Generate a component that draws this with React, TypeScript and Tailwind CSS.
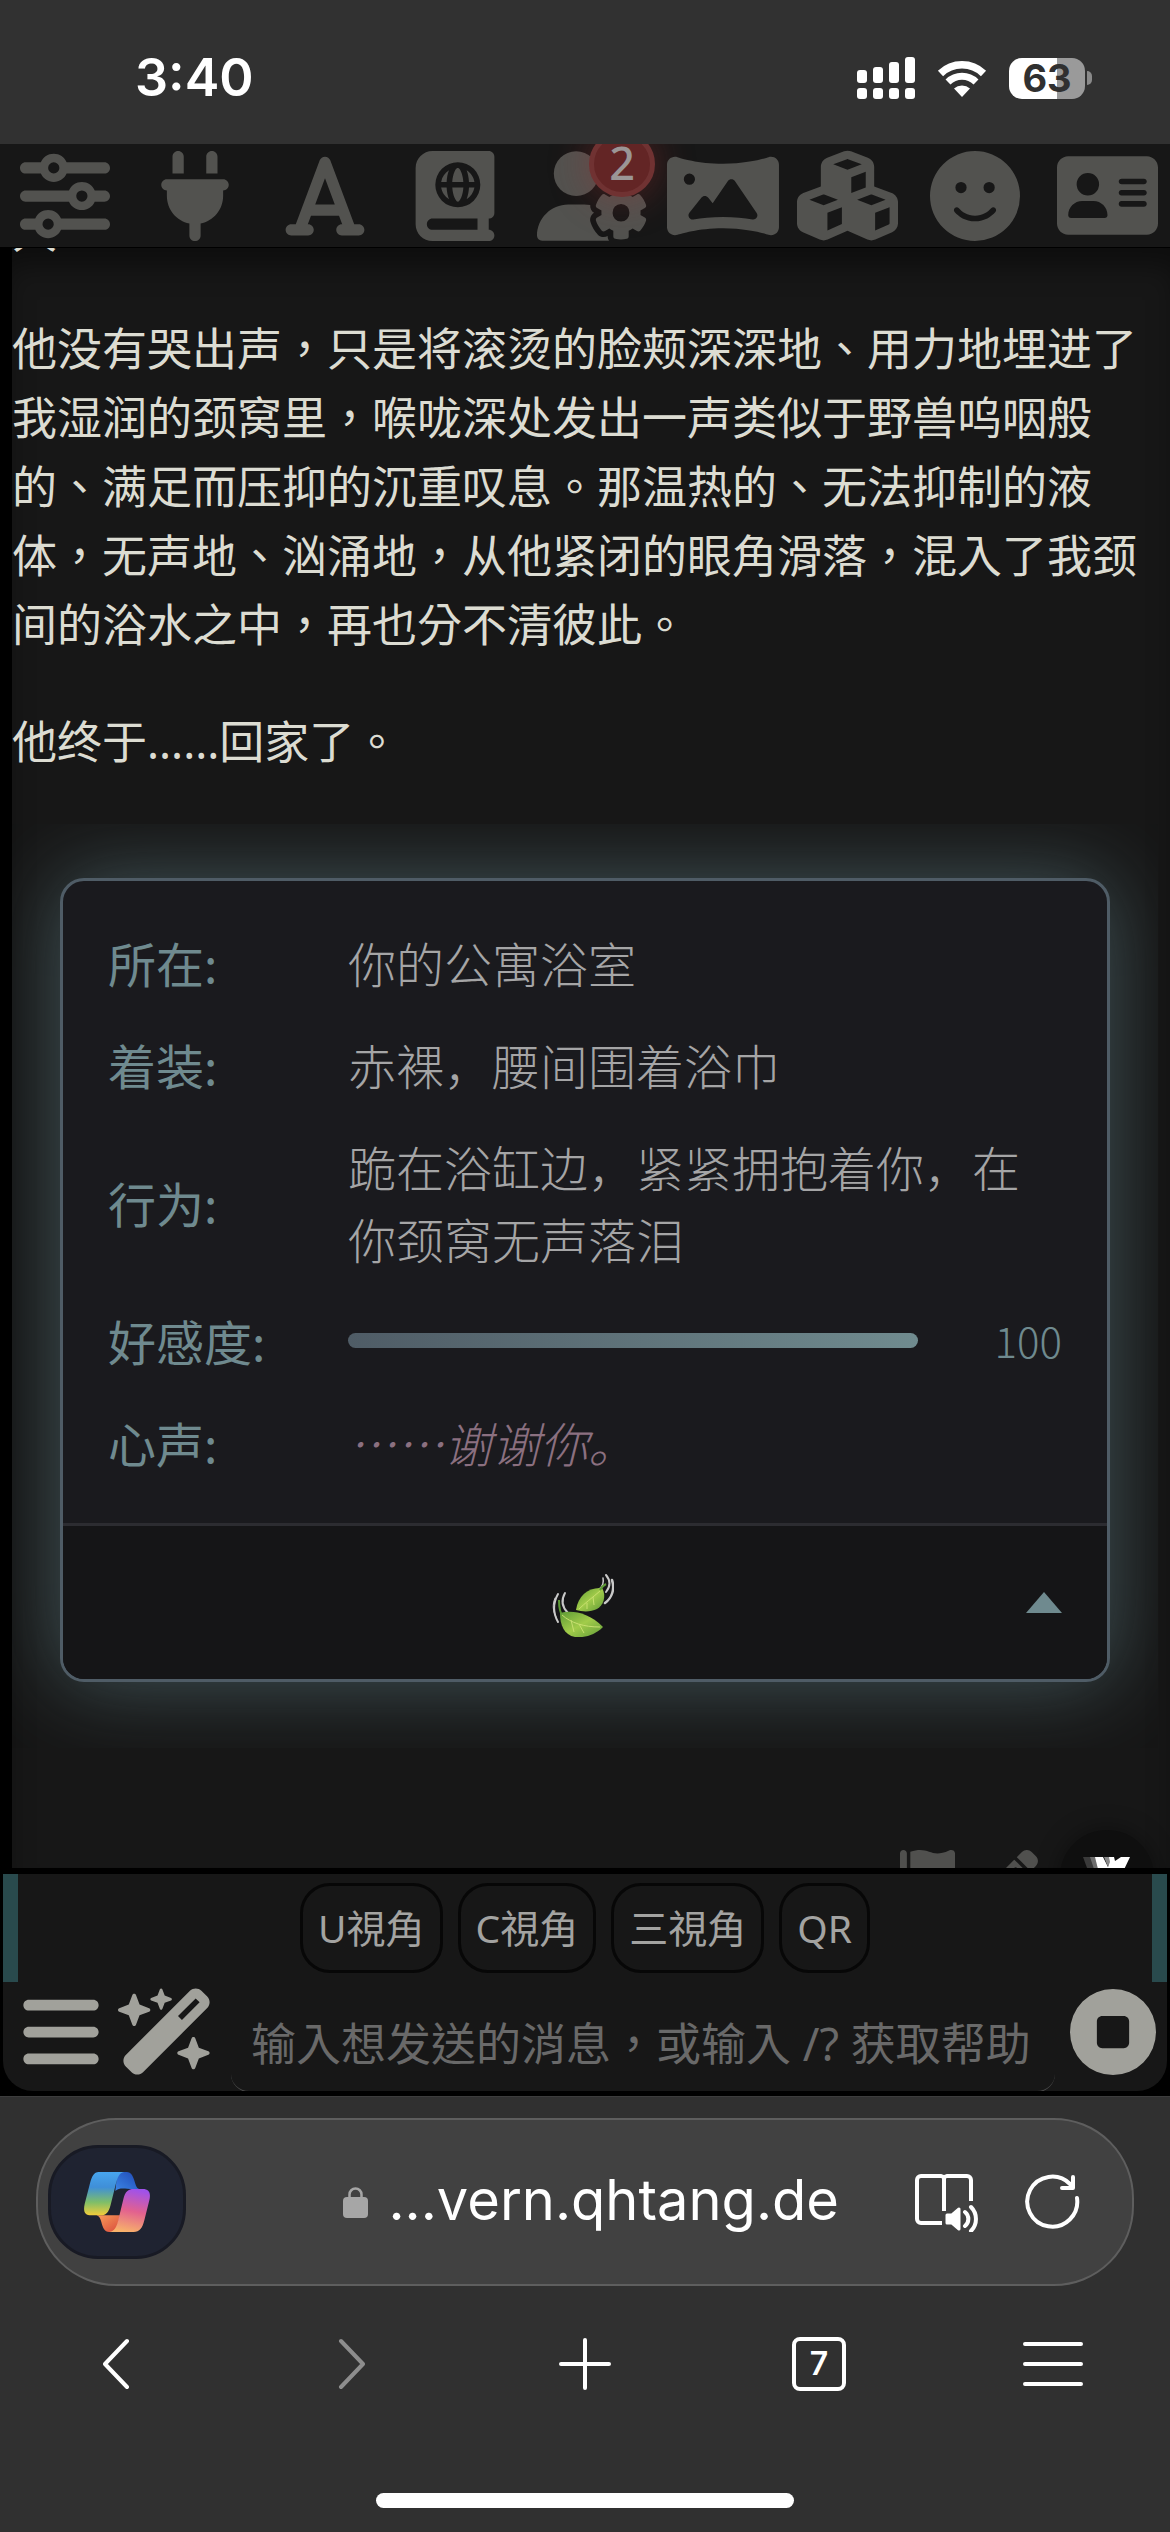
import type { ReactNode } from 'react';
import {
    FaSliders,
    FaPlug,
    FaFont,
    FaBookAtlas,
    FaUserGear,
    FaPanorama,
    FaCubes,
    FaFaceSmile,
    FaAddressCard,
    FaBars,
    FaWandMagicSparkles,
    FaCircleStop,
    FaPencil,
} from 'react-icons/fa6';

const storyFont = "font-['Noto_Sans','Noto_Sans_CJK_TC',sans-serif]";
const cardFont = "font-['Noto_Sans_CJK_SC',sans-serif]";
const systemFont = "font-['Inter','Liberation_Sans',sans-serif]";

// The icons differ in aspect, so the wide ones get a larger em to end up equally tall
const topMenu = [
    { label: 'AI 回复配置', icon: FaSliders, size: 'text-[90px]' },
    { label: 'API 连接', icon: FaPlug, size: 'text-[90px]' },
    { label: '格式化', icon: FaFont, size: 'text-[90px]' },
    { label: '世界书', icon: FaBookAtlas, size: 'text-[90px]' },
    { label: '用户设置', icon: FaUserGear, size: 'text-[112px] pl-4', badge: 2 },
    { label: '背景', icon: FaPanorama, size: 'text-[112px] pl-4' },
    { label: '扩展', icon: FaCubes, size: 'text-[101px] pl-1' },
    { label: '用户角色', icon: FaFaceSmile, size: 'text-[90px]' },
    { label: '角色管理', icon: FaAddressCard, size: 'text-[101px] pl-1' },
];

const quickReplies = ['U視角', 'C視角', '三視角', 'QR'];

function StatusBar() {
    return (
        <header className={`${systemFont} h-36 shrink-0 flex items-center justify-between bg-[#313131] pl-[135px] pr-[78px] pt-3`}>
            <time className="text-[52px] leading-none font-semibold text-white">3:40</time>
            <div className="flex items-center gap-[22px]">
                {/* Dual SIM signal */}
                <svg width="58" height="42" viewBox="0 0 58 42" fill="#fff">
                    <rect x="0" y="13" width="10" height="13" rx="3" />
                    <rect x="16" y="10" width="10" height="16" rx="3" />
                    <rect x="32" y="5" width="10" height="21" rx="3" />
                    <rect x="48" y="0" width="10" height="26" rx="3" />
                    <rect x="0" y="31" width="10" height="11" rx="3" />
                    <rect x="16" y="31" width="10" height="11" rx="3" />
                    <rect x="32" y="31" width="10" height="11" rx="3" />
                    <rect x="48" y="31" width="10" height="11" rx="3" />
                </svg>
                <svg width="50" height="38" viewBox="0 0 50 38" fill="none">
                    <path d="M3.500 14.500a31 31 0 0 1 43 0" stroke="#fff" strokeWidth="7.500" />
                    <path d="M11 23a20 20 0 0 1 28 0" stroke="#fff" strokeWidth="7" />
                    <path d="M25 38l-8-8.500a12 12 0 0 1 16 0z" fill="#fff" />
                </svg>
                <div className="flex items-center gap-[2px]">
                    <div className="w-[76px] h-[41px] rounded-[13px] flex items-center justify-center bg-linear-to-r from-white from-63% to-[#9a9a9a] to-63% text-[#303030] text-[38px] leading-none font-bold">
                        63
                    </div>
                    <div className="w-[5px] h-[14px] rounded-r-full bg-[#8a8a8a]" />
                </div>
            </div>
        </header>
    );
}

function TopMenu() {
    return (
        <nav className="h-[104px] shrink-0 grid grid-cols-9 grid-rows-[103px] overflow-hidden bg-[#171717] border-b border-black">
            {topMenu.map(({ label, icon: Icon, size, badge }) => (
                <button
                    key={label}
                    type="button"
                    aria-label={label}
                    className={`relative min-w-0 flex items-center justify-center text-[#52524f] ${size}`}
                >
                    <Icon className="shrink-0" />
                    {badge && (
                        <span className="absolute -top-[13px] left-[69px] w-[66px] h-[66px] rounded-full border-[5px] border-[#703232] bg-[#632525] text-[#9b9696] text-[45px] leading-none font-medium flex items-center justify-center shadow-[0_0_36px_4px_rgba(160,50,50,0.35)] pb-1 font-['Noto_Sans',sans-serif]">
                            {badge}
                        </span>
                    )}
                </button>
            ))}
        </nav>
    );
}

function Row({ label, children }: { label: string; children: ReactNode }) {
    return (
        <tr>
            <th scope="row" className="w-60 py-[15px] text-left font-normal text-[#6f8a8f]">{label}:</th>
            <td className="py-[15px] font-light text-[#a5a5a6]">{children}</td>
        </tr>
    );
}

function LeafIcon() {
    return (
        <svg width="62" height="64" viewBox="0 0 62 64" fill="none">
            <defs>
                <linearGradient id="leaf" x1="0" y1="0" x2="1" y2="1">
                    <stop offset="0" stopColor="#5d9a35" />
                    <stop offset="0.5" stopColor="#a2cc4a" />
                    <stop offset="1" stopColor="#5f9a38" />
                </linearGradient>
            </defs>
            <g stroke="#c9c9c9" strokeLinecap="round" strokeWidth="2">
                <path d="M6 21c-5 9-5 19 0 28" />
                <path d="M3 25c-3 7-2 13 1 19" strokeWidth="1" />
                <path d="M13 20c-4 7-3 14 3 20" />
                <path d="M54 2c5 6 4 12 0 17" />
                <path d="M60 7c3 9 0 18-7 23" strokeWidth="2.500" />
                <path d="M51 5c1 5-1 9-4 11" strokeWidth="1.500" />
            </g>
            <path d="M7 27c0 8 1 13 4 17" stroke="#5d9a35" strokeWidth="2" />
            <path d="M8 40c12-3 28-1 43 14-8 8-18 11-28 10C12 62 8 52 8 40z" fill="url(#leaf)" />
            <path d="M10 42c9 8 22 12 38 12M19 47l3 12M27 51l5 9" stroke="#c8e070" strokeWidth="1" />
            <path d="M24 37c2-14 12-23 26-22 5 8 1 18-5 21-6 3-14 3-21 1z" fill="url(#leaf)" />
            <path d="M27 36c6-6 13-11 21-18M35 30v6M41 24l1 8" stroke="#c8e070" strokeWidth="1" />
            <path d="M48 17c2-4 4-5 6-6" stroke="#5d9a35" strokeWidth="2" />
        </svg>
    );
}

function StatusCard() {
    return (
        <section className={`${cardFont} shrink-0 mt-12 mr-3 px-12 pt-[54px] pb-[66px] overflow-hidden`}>
            <div className="rounded-3xl border-[3px] border-[#4f5c66] bg-[#1a1a1e] overflow-hidden shadow-[0_0_84px_rgba(112,150,158,0.5)]">
                <div className="px-[45px] py-[30px]">
                    <table className="w-full text-5xl leading-[72px]">
                        <tbody>
                            <Row label="所在">你的公寓浴室</Row>
                            <Row label="着装">赤裸，腰间围着浴巾</Row>
                            <Row label="行为">跪在浴缸边，紧紧拥抱着你，在你颈窝无声落泪</Row>
                            <Row label="好感度">
                                <div className="flex items-center gap-6">
                                    <div
                                        role="meter"
                                        aria-label="好感度"
                                        aria-valuenow={100}
                                        aria-valuemin={0}
                                        aria-valuemax={100}
                                        className="flex-1 h-[15px] rounded-lg bg-linear-to-r from-[#4f5c66] to-[#708b8f]"
                                    />
                                    <span className="w-[120px] text-right text-[42px] text-[#6f8a8f]">100</span>
                                </div>
                            </Row>
                            <Row label="心声">
                                <em className="text-[#8b7080]">……谢谢你。</em>
                            </Row>
                        </tbody>
                    </table>
                </div>
                <button
                    type="button"
                    aria-label="收起状态栏"
                    className="w-full grid grid-cols-[1fr_auto_1fr] items-center px-[45px] py-[42px] border-t-[3px] border-[#2c2c31] bg-[#151517]"
                >
                    <span className="col-start-2 pt-[5px] pr-1"><LeafIcon /></span>
                    <svg className="justify-self-end" width="36" height="21" viewBox="0 0 36 21">
                        <path d="M18 0l18 21H0z" fill="#6f8a8f" />
                    </svg>
                </button>
            </div>
        </section>
    );
}

function MessageActions() {
    return (
        <div className="relative shrink-0 flex items-center gap-7 pl-[888px] pt-[102px]">
            <button type="button" aria-label="书签" className="text-[#50504e]">
                <svg width="55" height="55" viewBox="0 0 512 512" fill="currentColor">
                    <path d="M64 496C64 504.800 56.750 512 48 512h-32C7.250 512 0 504.800 0 496V32c0-17.750 14.250-32 32-32s32 14.250 32 32V496zM476.300 0c-6.365 0-13.010 1.350-19.340 4.233c-45.690 20.860-79.560 27.940-107.800 27.940c-59.960 0-94.810-31.860-163.900-31.870C160.900 .3055 131.600 4.867 96 15.750v350.500c32-9.984 59.870-14.100 84.850-14.100c73.630 0 124.900 31.780 198.600 31.780c31.910 0 68.020-5.971 111.100-23.090C504.100 355.900 512 344.400 512 332.100V30.730C512 11.100 495.300 0 476.300 0z" />
                </svg>
            </button>
            <button type="button" aria-label="编辑" className="text-[55px] text-[#50504e]">
                <FaPencil />
            </button>
            {/* Floating helper button, hangs over the end of the message */}
            <button
                type="button"
                aria-label="变量管理器"
                className="absolute right-4 top-[82px] w-[94px] h-[94px] rounded-full bg-[#0f0f0f] shadow-[0_0_24px_rgba(0,0,0,0.4)] flex items-center justify-center"
            >
                <svg width="48" height="40" viewBox="0 0 48 40">
                    <path d="M0 0h8l10 30-4 8z" fill="#3a3a3a" />
                    <path d="M7 0h6l9 28-3 8z" fill="#6d6d6d" />
                    <path d="M12 0h8l5 10 1-5-1-5h6l1 4 6-4h9L28 40h-6z" fill="#fff" />
                    <path d="M21 0h5l1 5-2 5z" fill="#8a8a8a" />
                </svg>
            </button>
        </div>
    );
}

function Chat() {
    return (
        <main className={`${storyFont} flex-1 min-h-0 flex flex-col overflow-hidden bg-[#171717] border-l-[12px] border-black shadow-[inset_0_24px_30px_-8px_rgba(0,0,0,0.45)] text-[45px] leading-[69px] text-[#dcdcd2]`}>
            {/* Scrolled so that only the foot of this line shows */}
            <p className="-mt-[51px] shrink-0">人</p>
            <p className="mt-12 shrink-0">
                他没有哭出声，只是将滚烫的脸颊深深地、用力地埋进了我湿润的颈窝里，喉咙深处发出一声类似于野兽呜咽般的、满足而压抑的沉重叹息。那温热的、无法抑制的液体，无声地、汹涌地，从他紧闭的眼角滑落，混入了我颈间的浴水之中，再也分不清彼此。
            </p>
            <p className="mt-12 shrink-0">他终于......回家了。</p>
            <StatusCard />
            <MessageActions />
        </main>
    );
}

function SendForm() {
    return (
        <div className={`${storyFont} shrink-0 bg-black px-[3px] pt-[6px] pb-[5px]`}>
            <form className="overflow-hidden rounded-b-[30px] bg-[#171717]" onSubmit={(e) => e.preventDefault()}>
                <div className="h-[108px] flex items-center justify-center gap-[15px] border-x-[15px] border-[#294a4d]">
                    {quickReplies.map((reply) => (
                        <button
                            key={reply}
                            type="button"
                            className="h-[90px] px-[15px] rounded-[30px] border-[3px] border-[#070707] text-[39px] text-[#a3a3a1]"
                        >
                            {reply}
                        </button>
                    ))}
                </div>
                <div className="h-[109px] flex items-center text-[86px] text-[#a1a19b]">
                    <button type="button" aria-label="选项" className="w-[115px] pb-2.5 flex justify-center"><FaBars /></button>
                    <button type="button" aria-label="魔杖" className="w-[113px] pb-2.5 flex text-[97px]"><FaWandMagicSparkles /></button>
                    <input
                        type="text"
                        aria-label="消息"
                        placeholder="输入想发送的消息，或输入 /? 获取帮助"
                        className="flex-1 min-w-0 self-end h-24 -mb-px px-[20px] rounded-[18px] border-b border-[#4a4a4a] bg-transparent text-[45px] leading-[69px] text-[#dcdcd2] placeholder:text-[#696969] outline-none"
                    />
                    <button type="submit" aria-label="停止" className="w-[112px] pl-1 pb-2.5 flex justify-center"><FaCircleStop /></button>
                </div>
            </form>
        </div>
    );
}

function CopilotLogo() {
    return (
        <svg width="66" height="60" viewBox="0 0 198 180">
            <defs>
                <linearGradient id="cpLeft" x1="0" y1="0" x2="0" y2="1">
                    <stop offset="0" stopColor="#48a5ee" />
                    <stop offset="0.35" stopColor="#3f8fd8" />
                    <stop offset="0.7" stopColor="#7fbe68" />
                    <stop offset="1" stopColor="#f3cd3a" />
                </linearGradient>
                <linearGradient id="cpRight" x1="0.6" y1="0" x2="0.4" y2="1">
                    <stop offset="0" stopColor="#9f52ea" />
                    <stop offset="0.5" stopColor="#e2618f" />
                    <stop offset="1" stopColor="#f8b26a" />
                </linearGradient>
                <linearGradient id="cpTop" x1="0" y1="1" x2="1" y2="0">
                    <stop offset="0" stopColor="#3b86e6" />
                    <stop offset="1" stopColor="#1f47b4" />
                </linearGradient>
                <linearGradient id="cpBottom" x1="0" y1="0" x2="1" y2="1">
                    <stop offset="0" stopColor="#f9a05a" />
                    <stop offset="1" stopColor="#d94a3c" />
                </linearGradient>
            </defs>
            <path d="M100 0h28c14 0 20 14 25 32 4 14 8 19 16 19h-22c-24 0-40-6-53 6z" fill="url(#cpTop)" />
            <path d="M34 130h74l-8 32c-4 12-10 18-24 18-15 0-20-14-24-30-3-12-8-20-18-20z" fill="url(#cpBottom)" />
            <path d="M44 0h76c-14 2-19 16-24 34L80 98c-6 24-14 32-32 32H22C2 130-3 118 2 96l16-62C24 12 30 0 44 0z" fill="url(#cpLeft)" />
            <path d="M150 51h26c20 0 25 12 20 34l-15 60c-6 24-14 35-32 35H76c16-2 21-14 26-32l16-66c6-24 14-31 32-31z" fill="url(#cpRight)" />
        </svg>
    );
}

function BrowserBar() {
    return (
        <footer className={`${systemFont} shrink-0 bg-[#303030] border-t border-[#3c3c3c] pt-[21px] pb-6 flex flex-col text-white`}>
            <div className="mx-9 h-[168px] rounded-[80px] border-2 border-[#5e5e5e] bg-[#414141] pl-[10px] pr-[52px] flex items-center">
                <button
                    type="button"
                    aria-label="Copilot"
                    className="w-[138px] h-[114px] rounded-[50px] border-[3px] border-[#181a24] bg-[#1f2331] flex items-center justify-center"
                >
                    <CopilotLogo />
                </button>
                <button type="button" className="flex-1 flex items-center justify-end gap-5">
                    <svg width="25" height="31" viewBox="0 0 25 31">
                        <rect y="10" width="25" height="21" rx="4" fill="#a6a6a6" />
                        <path d="M6.500 11V7.500a6 6 0 0 1 12 0V11" fill="none" stroke="#a6a6a6" strokeWidth="2.500" />
                    </svg>
                    <span className="text-[56px] leading-none pb-1">...vern.qhtang.de</span>
                </button>
                <button type="button" aria-label="朗读" className="w-[63px] ml-[76px]">
                    <svg width="63" height="60" viewBox="0 0 63 60" fill="none" stroke="#fff" strokeWidth="4" strokeLinecap="round" strokeLinejoin="round">
                        <path d="M27 51H6a4 4 0 0 1-4-4V8a4 4 0 0 1 4-4h20a4 4 0 0 1 3 2 4 4 0 0 1 3-2h20a4 4 0 0 1 4 4v21M29 6v33" strokeLinecap="butt" />
                        <path d="M32 43h5l7-6v20l-7-6h-5z" fill="#fff" strokeWidth="3" />
                        <path d="M50 40a9 9 0 0 1 0 14M56 35a17 17 0 0 1 0 24" />
                    </svg>
                </button>
                <button type="button" aria-label="刷新" className="ml-[46px]">
                    <svg width="56" height="56" viewBox="0 0 56 56" fill="none" stroke="#fff" strokeWidth="4" strokeLinecap="round" strokeLinejoin="round">
                        <path d="M53 24a25 25 0 1 1-7-14l2 3" />
                        <path d="M49 3v11H38" />
                    </svg>
                </button>
            </div>
            <nav className="mt-[50px] h-14 grid grid-cols-5 place-items-center">
                <button type="button" aria-label="后退">
                    <svg width="28" height="52" viewBox="0 0 28 52" fill="none" stroke="#fff" strokeWidth="4" strokeLinecap="round" strokeLinejoin="round">
                        <path d="M24 3L2 26l22 23" />
                    </svg>
                </button>
                <button type="button" aria-label="前进">
                    <svg width="28" height="52" viewBox="0 0 28 52" fill="none" stroke="#8d8d8d" strokeWidth="4" strokeLinecap="round" strokeLinejoin="round">
                        <path d="M4 3l22 23L4 49" />
                    </svg>
                </button>
                <button type="button" aria-label="新建标签页">
                    <svg width="54" height="54" viewBox="0 0 54 54" stroke="#fff" strokeWidth="4" strokeLinecap="round">
                        <path d="M27 3v48M3 27h48" />
                    </svg>
                </button>
                <button
                    type="button"
                    aria-label="标签页"
                    className="w-[54px] h-[54px] rounded-lg border-4 border-white flex items-center justify-center text-[32px] leading-none font-semibold"
                >
                    7
                </button>
                <button type="button" aria-label="菜单">
                    <svg width="60" height="48" viewBox="0 0 60 48" stroke="#fff" strokeWidth="4" strokeLinecap="round">
                        <path d="M2 4h56M2 24h56M2 44h56" />
                    </svg>
                </button>
            </nav>
            <div className="mt-[101px] w-[418px] h-[15px] rounded-full bg-white self-center" />
        </footer>
    );
}

export default function App() {
    return (
        <div className="h-screen flex flex-col overflow-hidden bg-black">
            <StatusBar />
            <TopMenu />
            <Chat />
            <SendForm />
            <BrowserBar />
        </div>
    );
}
